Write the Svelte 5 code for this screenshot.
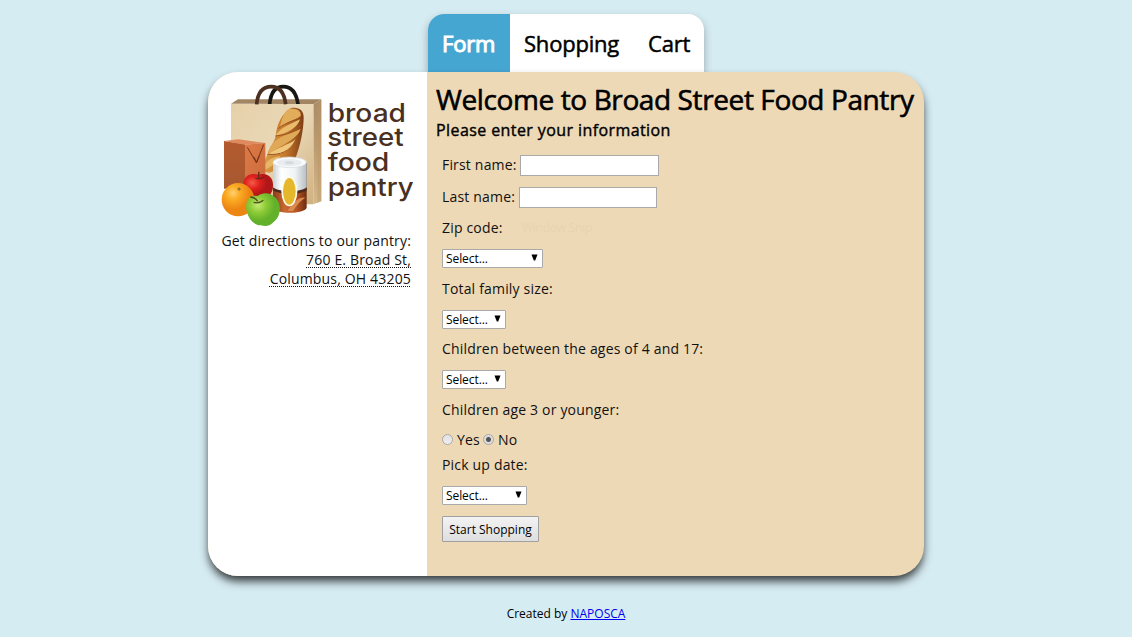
<script>
  let first = $state('');
  let last = $state('');
  let toddlers = $state('no');
</script>

{#snippet picker(width)}
  <button type="button" class="select" style="width: {width}px">
    <span>Select...</span>
    <svg width="7" height="7" viewBox="0 0 7 7"><path d="M0.5 0.5H6.5L4.2 6.5H2.8Z" /></svg>
  </button>
{/snippet}

<div class="page">
  <nav>
    <a class="tab active" href="#form">Form</a>
    <a class="tab shop" href="#shopping">Shopping</a>
    <a class="tab cart" href="#cart">Cart</a>
  </nav>

  <div class="panel">
    <aside>
      <svg class="logo" viewBox="0 0 660 480" width="220" height="160">
        <defs>
          <linearGradient id="bag" x2="1" y2="1"><stop stop-color="#e6d0a9" /><stop offset=".5" stop-color="#e9d8b7" /><stop offset="1" stop-color="#cfb17f" /></linearGradient>
          <linearGradient id="side" x2="0" y2="1"><stop stop-color="#aa8b65" /><stop offset=".45" stop-color="#bd9b70" /><stop offset="1" stop-color="#d5b98b" /></linearGradient>
          <linearGradient id="bread" x2="1"><stop stop-color="#dda04c" /><stop offset=".55" stop-color="#c77b2c" /><stop offset="1" stop-color="#7f3d16" /></linearGradient>
          <linearGradient id="box" x2="1" y2="1"><stop stop-color="#de7a48" /><stop offset="1" stop-color="#c9693a" /></linearGradient>
          <linearGradient id="boxside" x2="0" y2="1"><stop stop-color="#b45a2f" /><stop offset="1" stop-color="#a65830" /></linearGradient>
          <linearGradient id="can" x2="1"><stop stop-color="#c9d1d4" /><stop offset=".25" stop-color="#fff" /><stop offset=".65" stop-color="#f0f3f4" /><stop offset="1" stop-color="#b5bfc4" /></linearGradient>
          <linearGradient id="band" x2="1"><stop stop-color="#8a3b17" /><stop offset=".35" stop-color="#c96a32" /><stop offset=".7" stop-color="#b65423" /><stop offset="1" stop-color="#6e2c12" /></linearGradient>
          <radialGradient id="orange" cx=".35" cy=".3"><stop stop-color="#ffd071" /><stop offset=".4" stop-color="#fbad25" /><stop offset="1" stop-color="#ed8512" /></radialGradient>
          <radialGradient id="red" cx=".3" cy=".35"><stop stop-color="#f65b49" /><stop offset=".5" stop-color="#df211d" /><stop offset="1" stop-color="#af1718" /></radialGradient>
          <radialGradient id="green" cx=".35" cy=".35"><stop stop-color="#c5ea73" /><stop offset=".5" stop-color="#8cca36" /><stop offset="1" stop-color="#63b02a" /></radialGradient>
        </defs>
        <path d="M69 95L90 82H340L316 97Z" fill="#a28563" />
        <path d="M185 97C188 61 203 44 226 44C251 44 265 62 270 97" fill="none" stroke="#191713" stroke-width="11" />
        <path d="M316 97L340 82V388L316 397Z" fill="url(#side)" />
        <path d="M328 92L340 82V388L328 393Z" fill="#b6956a" opacity=".4" />
        <path d="M69 96H316V397H69Z" fill="url(#bag)" />
        <path d="M146 97C149 62 164 44 190 44C216 44 229 63 233 97" fill="none" stroke="#4d3020" stroke-width="11" />
        <path d="M249 108C273 104 287 115 287 136C287 175 276 224 263 257L223 286L185 302C171 301 160 297 160 289C164 271 179 253 180 240C190 218 201 208 204 187C206 157 222 124 249 108Z" fill="url(#bread)" />
        <path d="M240 112C267 106 281 119 278 132C266 144 241 145 216 166C220 144 227 123 240 112Z" fill="#e2ad5b" />
        <path d="M203 191C218 166 246 157 276 142C270 165 240 185 203 191Z" fill="#eabb6c" />
        <path d="M187 224C210 190 246 187 278 171C266 204 219 220 180 246Z" fill="#dfa958" />
        <path d="M181 247C210 225 239 221 263 202C250 238 218 252 181 247Z" fill="#efc87e" />
        <path d="M161 295C172 267 196 252 218 253C202 277 184 291 161 295Z" fill="#e5b767" />
        <path d="M211 170C223 158 248 149 272 139M202 192C220 190 257 185 278 160M179 247C216 250 246 239 263 204" fill="none" stroke="#9d5520" stroke-width="3" />
        <path d="M48 207L111 217V350H48Z" fill="url(#boxside)" />
        <path d="M48 207L91 202L172 213L111 218Z" fill="#df895e" />
        <path d="M111 218L172 213V315L111 349Z" fill="url(#box)" />
        <path d="M118 226L145 272L167 218M137 254L146 271L154 252" fill="none" stroke="#753315" stroke-width="3" />
        <path d="M195 270V407C202 427 289 427 296 407V270Z" fill="url(#band)" />
        <path d="M196 347Q245 369 296 347V357Q246 376 196 357Z" fill="#4e2b1c" />
        <path d="M238 416Q269 371 292 377Q271 389 255 418Z" fill="#d98b50" />
        <path d="M195 270V345C207 361 284 361 296 345V270Z" fill="url(#can)" />
        <ellipse cx="245" cy="271" rx="50" ry="16" fill="#fafbfc" stroke="#d3dade" stroke-width="2" />
        <ellipse cx="244" cy="272" rx="37" ry="11" fill="#e9edef" />
        <ellipse cx="244" cy="272" rx="14" ry="5" fill="#d4dadd" />
        <ellipse cx="244" cy="358" rx="24" ry="45" fill="#fffbea" />
        <ellipse cx="244" cy="358" rx="19" ry="40" fill="#e5b82c" />
        <path d="M106 333C109 307 134 303 150 308C177 300 196 315 195 339C196 362 181 381 156 381C130 384 106 363 106 333Z" fill="url(#red)" />
        <path d="M142 318Q154 324 168 315M153 319Q150 309 153 299" fill="none" stroke="#6d251b" stroke-width="4" />
        <ellipse cx="90" cy="383" rx="49" ry="50" fill="url(#orange)" />
        <path d="M87 350L94 346L99 352L93 357Z" fill="#987225" />
        <path d="M115 397C117 376 133 369 149 372C168 358 190 364 204 379C224 402 216 437 196 451C184 464 171 464 159 460C135 462 110 426 115 397Z" fill="url(#green)" />
        <path d="M137 391Q153 396 166 385M149 388Q142 376 127 375" fill="none" stroke="#4c4c21" stroke-width="4" />
        <g class="wordmark">
          <text x="359" y="149" textLength="235" lengthAdjust="spacingAndGlyphs">broad</text>
          <text x="358" y="222" textLength="229" lengthAdjust="spacingAndGlyphs">street</text>
          <text x="359" y="296" textLength="185" lengthAdjust="spacingAndGlyphs">food</text>
          <text x="359" y="371" textLength="258" lengthAdjust="spacingAndGlyphs">pantry</text>
        </g>
      </svg>
      <p>Get directions to our pantry:<br /><span class="address">760 E. Broad St,</span><br /><span class="address">Columbus, OH 43205</span></p>
    </aside>

    <main>
      <h1>Welcome to Broad Street Food Pantry</h1>
      <h2>Please enter your information</h2>
      <form>
        <label class="row" style="height: 32px"><span>First name:</span><input class="text" bind:value={first} style="width: 139px" /></label>
        <label class="row" style="height: 32px"><span>Last name:</span><input class="text last" bind:value={last} style="width: 138px" /></label>
        <div class="row"><span class="zip">Zip code:</span><span class="ghost">Window Snip</span></div>
        <div class="row pick">{@render picker(101)}</div>
        <div class="row"><span>Total family size:</span></div>
        <div class="row pick">{@render picker(64)}</div>
        <div class="row" style="height: 29px"><span>Children between the ages of 4 and 17:</span></div>
        <div class="row pick">{@render picker(64)}</div>
        <div class="row"><span>Children age 3 or younger:</span></div>
        <div class="row radios">
          <label><input type="radio" bind:group={toddlers} value="yes" />Yes</label>
          <label><input type="radio" bind:group={toddlers} value="no" />No</label>
        </div>
        <div class="row" style="height: 22px"><span>Pick up date:</span></div>
        <div class="row" style="height: 38px">{@render picker(85)}</div>
        <button class="submit" type="button">Start Shopping</button>
      </form>
    </main>
  </div>
  <footer>Created by <a href="#naposca">NAPOSCA</a></footer>
</div>

<style>
  :global(body) { margin: 0; background: #d6ecf3; }
  .page { box-sizing: border-box; height: 637px; padding-top: 14px; overflow: hidden; display: flex; flex-direction: column; align-items: center; font: 14px/19px "Open Sans", sans-serif; color: #111; background: #d6ecf3; }
  nav { display: flex; width: 276px; height: 58px; flex: none; border-radius: 16px 16px 0 0; overflow: hidden; background: #fff; box-shadow: 0 4px 8px rgba(0, 0, 0, .3); }
  .tab { box-sizing: border-box; padding: 14px 0 0 14px; font-size: 22px; line-height: 30px; letter-spacing: -.2px; text-decoration: none; color: #000; -webkit-text-stroke: .5px currentColor; white-space: nowrap; }
  .active { width: 82px; background: #45a6d2; color: #fff; -webkit-text-stroke-width: 1px; }
  .shop { width: 124px; }
  .cart { width: 70px; }
  .panel { position: relative; display: flex; width: 716px; height: 504px; flex: none; border-radius: 30px; overflow: hidden; background: #eed9b7; box-shadow: 0 6px 10px -1px rgba(0, 0, 0, .78); }
  aside { width: 219px; flex: none; background: #fff; }
  .logo { display: block; margin-bottom: -1px; }
  .wordmark { font: 500 76px Inter, sans-serif; fill: #49301f; }
  aside p { margin: 0; padding-right: 16px; text-align: right; letter-spacing: .17px; }
  .address { text-decoration: underline dotted 1px; text-underline-offset: 2px; }
  main { flex: 1; min-width: 0; padding-left: 8px; }
  h1, h2 { margin: 0; padding-left: 1px; font-weight: 400; color: #000; white-space: nowrap; }
  h1 { padding-top: 8px; font-size: 28px; line-height: 38px; letter-spacing: -.39px; -webkit-text-stroke: .6px #000; }
  h2 { padding-top: 1px; font-size: 16px; line-height: 22px; letter-spacing: .41px; -webkit-text-stroke: .4px #000; }
  form { padding: 8px 0 0 7px; letter-spacing: .18px; }
  .row { display: flex; align-items: center; height: 30px; white-space: nowrap; }
  .row > span { margin-bottom: 2px; }
  .pick { height: 31px; }
  .text { box-sizing: border-box; height: 21px; margin: 1px 0 0 3px; padding: 1px 3px; border: 1px solid #a9a9a9; background: #fff; }
  .last { margin-left: 4px; }
  .zip { width: 60px; }
  .ghost { box-sizing: border-box; width: 174px; height: 20px; padding-left: 20px; font-size: 12px; line-height: 22px; letter-spacing: -.25px; color: #e8d3b1; }
  .select { box-sizing: border-box; display: flex; align-items: center; justify-content: space-between; height: 19px; padding: 0 4px 0 3px; border: 1px solid #a9a9a9; border-radius: 1px; background: #fff; color: #000; font: 12px/17px "Open Sans", sans-serif; letter-spacing: -.08px; }
  .select svg { margin-top: -2px; }
  .radios { height: 29px; }
  .radios label { display: flex; align-items: center; margin-right: 3px; }
  .radios input { appearance: none; box-sizing: border-box; width: 11px; height: 11px; margin: 0 4px 0 0; border: 1px solid #aaa; border-radius: 50%; background: linear-gradient(#e2e2e2, #eee); }
  .radios input:checked { background: radial-gradient(circle, #555 0 2px, #ddd 3px); }
  .submit { display: block; box-sizing: border-box; width: 97px; height: 26px; margin-top: 2px; padding: 1px 0 0; border: 1px solid #a0a0a0; border-radius: 1px; background: linear-gradient(#f3f3f3, #dedede); color: #000; font: 12px/24px "Open Sans", sans-serif; }
  footer { margin-top: 30px; font-size: 12px; line-height: 16px; color: #000; }
  footer a { color: #00e; }
</style>
